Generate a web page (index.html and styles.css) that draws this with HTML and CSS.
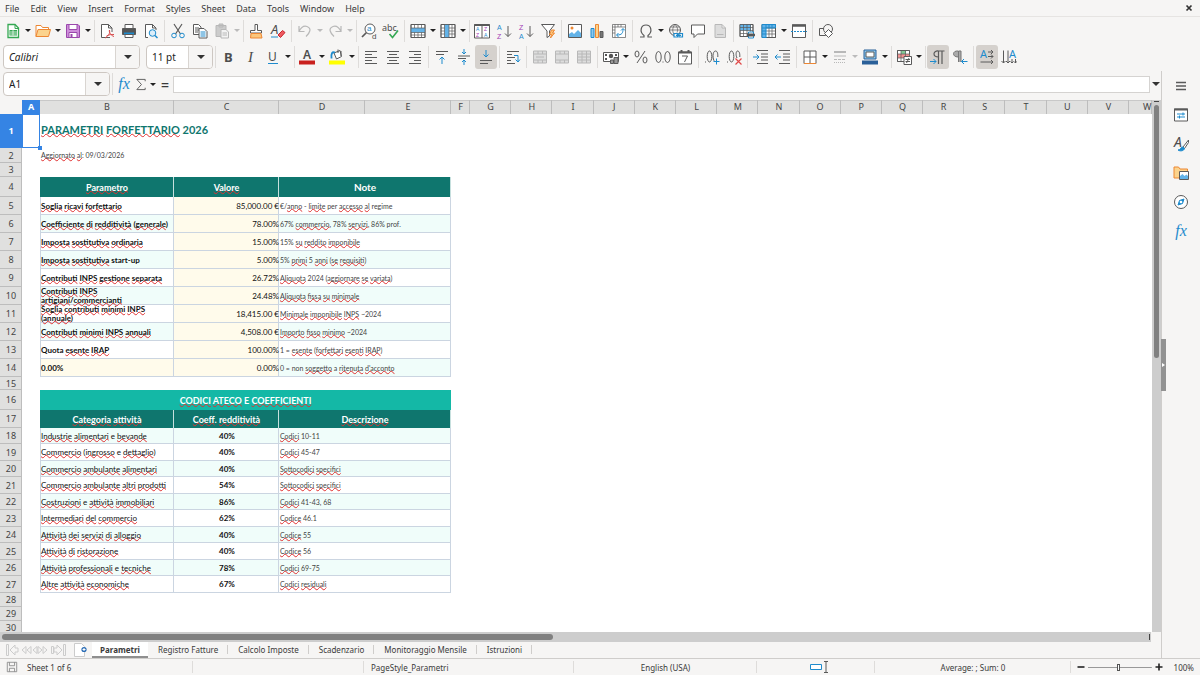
FILE: index.html
```html
<!DOCTYPE html>
<html lang="it">
<head>
<meta charset="utf-8">
<meta name="viewport" content="width=device-width, initial-scale=1">
<title>Parametri Forfettario 2026</title>
<link rel="stylesheet" href="styles.css">
</head>
<body>
<div class="app">
<nav class="menubar" aria-label="Menu">
<button>File</button><button>Edit</button><button>View</button><button>Insert</button><button>Format</button><button>Styles</button><button>Sheet</button><button>Data</button><button>Tools</button><button>Window</button><button>Help</button>
<button class="close" aria-label="Close"><svg viewBox="0 0 8 8"><path d="M1.5 1.5l5 5M6.500 1.500l-5 5" stroke-width="1.7"/></svg></button>
</nav>

<div class="toolbar" role="toolbar" aria-label="Standard">
<button class="tool" aria-label="New"><svg viewBox="0 0 16 16"><path class="gr" fill="#fff" d="M3 1.500h7l3.500 3.500v9.500h-10.500z" stroke-width="1.300"/><path class="gr" d="M10 1.500v4h3.500"/><path fill="#35a853" stroke="none" d="M4.500 7h7.500v5.500h-7.500z"/><path stroke="#fff" d="M5 9h7M8 7v5.500M5 11h7" stroke-width=".7"/></svg></button><button class="drop" aria-label="New options"></button>
<button class="tool" aria-label="Open"><svg viewBox="0 0 16 16"><path class="or" fill="#fff" d="M1 13.500v-11h5l1.500 2h6v3"/><path class="or" fill="#fbd38d" d="M1 13.500l2-7h12.500l-2 7z"/></svg></button><button class="drop" aria-label="Open options"></button>
<button class="tool" aria-label="Save"><svg viewBox="0 0 16 16"><path stroke="#9b48ac" fill="#cf8fdb" d="M1.500 1.500h11.500l1.500 1.500v11.500h-13z"/><path stroke="#9b48ac" fill="#fff" d="M4 1.500h8v5h-8zM4 9.500h8v5h-8z"/><path fill="#9b48ac" stroke="none" d="M5.500 11h2v3.500h-2z"/></svg></button><button class="drop" aria-label="Save options"></button>
<i class="sep"></i>
<button class="tool" aria-label="Export as PDF"><svg viewBox="0 0 16 16"><path fill="#fff" d="M11 14.500h-8.500v-13h7l3.500 3.500v4M9.500 1.500v3.500h3.500"/><path stroke="#d94a4a" d="M10.500 7c1 3-1.500 6.500-4.500 8M10.500 7c-1 2 2 6 4.500 6.500M7.500 13c2.500-1.500 5-1.500 7.500-1.500"/></svg></button>
<button class="tool" aria-label="Print"><svg viewBox="0 0 16 16"><path fill="#fff" d="M4 5v-3.500h8v3.500"/><path fill="#555" d="M1.500 5.500h13v6h-13z"/><path class="bl" stroke-width="2" d="M3 10.500h10"/><path fill="#fff" d="M4 11.500h8v3h-8z"/></svg></button>
<button class="tool" aria-label="Print preview"><svg viewBox="0 0 16 16"><path fill="#fff" d="M5 14.500h-2.500v-13h7l3.500 3.500v2M9.500 1.500v3.500h3.500"/><circle class="bl" fill="#dceefa" cx="9.500" cy="10" r="3.300"/><path class="bl" d="M12 12.500l2.500 2.500" stroke-width="1.500"/></svg></button>
<i class="sep"></i>
<button class="tool" aria-label="Cut"><svg viewBox="0 0 16 16"><path d="M4 1l6.500 10M12 1l-6.500 10" stroke-width="1.200"/><circle class="bl" cx="4" cy="12.500" r="2.300"/><circle class="bl" cx="12" cy="12.500" r="2.300"/></svg></button>
<button class="tool" aria-label="Copy"><svg viewBox="0 0 16 16"><path fill="#fff" d="M1.500 1.500h5l2.500 2.500v7.500h-7.500zM3 5h4M3 7h4M3 9h3"/><path fill="#fff" d="M7 5.500h5l3 3v6.500h-8z"/><path class="bl" d="M8.500 9h5M8.500 11h5M8.500 13h5"/></svg></button>
<button class="tool off" aria-label="Paste"><svg viewBox="0 0 16 16"><path fill="#ccc" d="M2 2.500h10v11h-10zM5 1h4v3h-4z"/><path fill="#f3f3f3" d="M7 6.500h5l2.500 2.500v6h-7.500zM8.500 10h4.500M8.500 12h4.500"/></svg></button><button class="drop off" aria-label="Paste options"></button>
<i class="sep"></i>
<button class="tool" aria-label="Clone formatting"><svg viewBox="0 0 16 16"><path fill="#fff" d="M7 1.500h2.500v6h4v2.500h-11v-2.500h4.500z"/><path class="or" fill="#fbc67c" d="M3 10.500h10l1 4.500h-11.500z"/></svg></button>
<button class="tool" aria-label="Clear formatting"><svg viewBox="0 0 16 16"><text x="1" y="11" font-size="13" font-style="italic">A</text><path class="bl" d="M1 14h7"/><path stroke="#c9252d" fill="#ee5a60" d="M8 12l4.500-4.500 2.500 2-4.500 5z"/></svg></button>
<i class="sep"></i>
<button class="tool off" aria-label="Undo"><svg viewBox="0 0 16 16"><path d="M2 3v5.500h5.500M2 8.500c2-4 5-6 8-5 5 2 3 6-1 10" stroke-width="1.200"/></svg></button><button class="drop off" aria-label="Undo list"></button>
<button class="tool off" aria-label="Redo"><svg viewBox="0 0 16 16"><path d="M14 3v5.500h-5.500M14 8.500c-2-4-5-6-8-5-5 2-3 6 1 10" stroke-width="1.200"/></svg></button><button class="drop off" aria-label="Redo list"></button>
<i class="sep"></i>
<button class="tool" aria-label="Find and replace"><svg viewBox="0 0 16 16"><circle fill="#fff" cx="9" cy="6" r="5"/><path d="M5.500 9.500l-4.500 4.500" stroke-width="1.700"/><text class="bt ls" x="6" y="8" font-size="8">a</text><text class="ls" x="11" y="16" font-size="8">d</text></svg></button>
<button class="tool" aria-label="Spelling"><svg viewBox="0 0 16 16"><text x="-1" y="8" font-size="9">abc</text><path stroke="#35a853" stroke-width="1.600" d="M6.500 11l3 3.500 5.500-7"/></svg></button>
<i class="sep"></i>
<button class="tool" aria-label="Row"><svg viewBox="0 0 16 16"><path fill="#fff" d="M1 1.500h14v13h-14z"/><path class="bf" d="M1 5h14v4.500h-14z"/><path class="thin" d="M1 1.500h14v13h-14zM1 5h14M1 9.500h14M1 12h14M4.500 1.500v3.500M8 1.500v3.500M11.500 1.500v3.500M4.500 9.500v5M8 9.500v5M11.500 9.500v5"/></svg></button><button class="drop" aria-label="Row options"></button>
<button class="tool" aria-label="Column"><svg viewBox="0 0 16 16"><path fill="#fff" d="M1 1.500h14v13h-14z"/><path class="bf" d="M4.500 1.500h4.500v13h-4.500z"/><path class="thin" d="M1 1.500h14v13h-14zM4.500 1.500v13M9 1.500v13M12 1.500v13M1 5h3.500M1 8h3.500M1 11h3.500M9 5h6M9 8h6M9 11h6"/></svg></button><button class="drop" aria-label="Column options"></button>
<i class="sep"></i>
<button class="tool" aria-label="Sort"><svg viewBox="0 0 16 16"><path fill="#fff" d="M.5 1.500h15v13.500h-15zM8 2v13"/><path stroke-width="2" d="M.5 2h15"/><text class="bt ls" x="2" y="8" font-size="5">A</text><text class="pt ls" x="2" y="14" font-size="5">Z</text><text class="pt ls" x="10" y="8" font-size="5">Z</text><text class="bt ls" x="10" y="14" font-size="5">A</text></svg></button>
<button class="tool" aria-label="Sort ascending"><svg viewBox="0 0 16 16"><text class="bt ls" x="1" y="6.500" font-size="7">A</text><text class="pt ls" x="1" y="15.500" font-size="7">Z</text><path d="M12 3v10.500M9 10.500l3 3 3-3"/></svg></button>
<button class="tool" aria-label="Sort descending"><svg viewBox="0 0 16 16"><text class="pt ls" x="1" y="6.500" font-size="7">Z</text><text class="bt ls" x="1" y="15.500" font-size="7">A</text><path d="M12 3v10.500M9 10.500l3 3 3-3"/></svg></button>
<button class="tool" aria-label="AutoFilter"><svg viewBox="0 0 16 16"><path fill="#fff" d="M1.500 1.500h13l-5 6.500v5l-2.500 1.500v-6.500z"/><path class="or" fill="#fbc67c" d="M11.500 7l-2 4.500h2l-1 3.500 4-5h-2l2-3z"/></svg></button>
<i class="sep"></i>
<button class="tool" aria-label="Image"><svg viewBox="0 0 16 16"><path fill="#fff" d="M1.500 1.500h13v13h-13z"/><circle class="of" cx="5" cy="5" r="1.500"/><path class="bf" d="M2 14v-3l3-2 2 2 4-4 3 3v4z"/></svg></button>
<button class="tool" aria-label="Chart"><svg viewBox="0 0 16 16"><path class="bl" fill="#8cc8ef" d="M2 5.500h3v9h-3z"/><path class="or" fill="#fbd38d" d="M6.500 1.500h3v13h-3z"/><path fill="#777" d="M11 8.500h3v6h-3z"/></svg></button>
<button class="tool" aria-label="Pivot table"><svg viewBox="0 0 16 16"><path fill="#fff" class="thin" d="M1.500 1.500h13v13h-13zM1.500 4h13M4 1.500v13M1.500 7h2.500M1.500 10h2.500M7 1.500v2.500M10 1.500v2.500"/><path class="bl" d="M6 12c5 0 6-2 6-6M10 7.500l2-2 2 2M7.500 10l-2 2 2 2"/></svg></button>
<i class="sep"></i>
<button class="tool" aria-label="Special character"><svg viewBox="0 0 16 16"><path stroke-width="1.200" d="M2 14h4v-1.500c-5-4-3-10.500 2-10.500s7 6.500 2 10.500v1.500h4"/></svg></button><button class="drop" aria-label="Special character list"></button>
<button class="tool" aria-label="Hyperlink"><svg viewBox="0 0 16 16"><circle cx="7" cy="7" r="5.500"/><path class="thin" d="M1.500 7h11M2.500 4h9M7 1.500c-3 3-3 8 0 11M7 1.500c3 3 3 6 2 8"/><path class="bl" fill="#f6f5f4" d="M6 10.500h3.500v3.500h-3.500zM11 10.500h3.500v3.500h-3.500zM8 12.300h5" stroke-width="1.200"/></svg></button>
<button class="tool" aria-label="Comment"><svg viewBox="0 0 16 16"><path fill="#fff" d="M1.500 2h13v9h-7l-3.500 3.500v-3.500h-2.500z"/></svg></button>
<button class="tool off" aria-label="Headers and footers"><svg viewBox="0 0 16 16"><path fill="#ddd" d="M3 1.500h7l3.500 3.500v9.500h-10.500zM10 1.500v3.500h3.500M5 11.500h6.500"/></svg></button>
<i class="sep"></i>
<button class="tool" aria-label="Print area"><svg viewBox="0 0 16 16"><path fill="#fff" d="M1 1.500h13v12h-13z"/><path class="bf" d="M1 1.500h11v6h-11z"/><path class="thin" d="M1 1.500h13v12h-13zM1 4.500h13M1 7.500h13M1 10.500h8M4.500 1.500v12M8 1.500v12M11.500 1.500v7"/><path class="bl" fill="#fff" d="M9.500 9h5v6h-5z"/><path fill="#555" d="M8.500 11h7v2h-7z"/></svg></button>
<button class="tool" aria-label="Freeze rows and columns"><svg viewBox="0 0 16 16"><path fill="#fff" d="M1 1.500h13.500v13h-13.500z"/><path class="bf" d="M1 1.500h13.500v3.500h-9.500v9.500h-4z"/><path class="thin" d="M5 5h9.500v9.500h-9.500M5 8h9.500M5 11h9.500M8 5v9.500M11 5v9.500"/><path class="bl" d="M1 1.500h13.500v3.500M1 1.500v13h4M5 1v14M1 5h13M1 8h4M1 11h4M8 1.500v3.500M11 1.500v3.500"/></svg></button><button class="drop" aria-label="Freeze options"></button>
<button class="tool" aria-label="Split window"><svg viewBox="0 0 16 16"><path fill="#fff" d="M1.500 2h13v12.500h-13z"/><path stroke-width="2.500" d="M1 2.500h14"/><path class="bl" stroke-dasharray="2 1" d="M0 8.500h16"/></svg></button>
<i class="sep"></i>
<button class="tool" aria-label="Draw functions"><svg viewBox="0 0 16 16"><path d="M1.500 5.500h6v7h-6z"/><circle fill="#f6f5f4" cx="10" cy="6" r="4.500"/><path fill="#fff" d="M10.500 6.500l4 4-4 4-4-4z"/></svg></button>
</div>

<div class="toolbar format" role="toolbar" aria-label="Formatting">
<div class="combo font"><input aria-label="Font name" value="Calibri"><button aria-label="Font list"></button></div>
<div class="combo size"><input aria-label="Font size" value="11 pt"><button aria-label="Size list"></button></div>
<i class="sep"></i>
<button class="tool" aria-label="Bold"><svg viewBox="0 0 16 16"><text x="3" y="13" font-size="13" font-weight="700">B</text></svg></button>
<button class="tool" aria-label="Italic"><svg viewBox="0 0 16 16"><text class="serif" x="5" y="13" font-size="15" font-style="italic">I</text></svg></button>
<button class="tool" aria-label="Underline"><svg viewBox="0 0 16 16"><text x="3" y="12" font-size="12">U</text><path class="bl" d="M3 14.500h10"/></svg></button><button class="drop" aria-label="Underline options"></button>
<i class="sep"></i>
<button class="tool" aria-label="Font color"><svg viewBox="0 0 16 16"><text x="4" y="10" font-size="12" font-weight="600">A</text><path fill="#c9211e" stroke="none" d="M0 11.500h16v4h-16z"/></svg></button><button class="drop" aria-label="Font color options"></button>
<button class="tool" aria-label="Background color"><svg viewBox="0 0 16 16"><path fill="#fff" d="M5 4l6-2.500 1.500 6-5 2.500z"/><path d="M9 4v-3.500M12 2v5"/><path class="bl" d="M6 3.500c-3-1-4 1-3.500 6" stroke-width="1.800"/><path fill="#ff0" stroke="none" d="M0 11.500h16v4h-16z"/></svg></button><button class="drop" aria-label="Background color options"></button>
<i class="sep"></i>
<button class="tool" aria-label="Align left"><svg viewBox="0 0 16 16"><path d="M2 2.500h12M2 5.500h7M2 8.500h12M2 11.500h7M2 14.500h12"/></svg></button>
<button class="tool" aria-label="Center"><svg viewBox="0 0 16 16"><path d="M2 2.500h12M4 5.500h8M2 8.500h12M4 11.500h8M2 14.500h12"/></svg></button>
<button class="tool" aria-label="Align right"><svg viewBox="0 0 16 16"><path d="M2 2.500h12M7 5.500h7M2 8.500h12M7 11.500h7M2 14.500h12"/></svg></button>
<i class="sep"></i>
<button class="tool" aria-label="Align top"><svg viewBox="0 0 16 16"><path d="M2 2.500h12M2 5.500h8"/><path class="bl" d="M8 15v-7M5.500 10.500l2.500-2.500 2.500 2.500"/></svg></button>
<button class="tool" aria-label="Center vertically"><svg viewBox="0 0 16 16"><path d="M2 7h12M2 9.500h8"/><path class="bl" d="M8 0v5M6 3l2 2 2-2M8 16v-5M6 13l2-2 2 2"/></svg></button>
<button class="tool on" aria-label="Align bottom"><svg viewBox="0 0 16 16"><path d="M2 11.500h12M2 14.500h8"/><path class="bl" d="M8 1v7M5.500 5.500l2.500 2.500 2.500-2.500"/></svg></button>
<i class="sep"></i>
<button class="tool" aria-label="Wrap text"><svg viewBox="0 0 16 16"><path d="M2 2.500h12M2 5.500h5M2 8.500h8M2 11.500h4M2 14.500h8"/><path class="bl" d="M9 6.500h4v6.500M10.500 10.500l2.500 2.500 2-2.500"/></svg></button>
<i class="sep"></i>
<button class="tool off" aria-label="Merge and center"><svg viewBox="0 0 16 16"><path fill="#ddd" d="M1.500 2h13v12h-13zM1.500 5h13M1.500 11h13M6 2v3M10.500 2v3M6 11v3M10.500 11v3M4 8h8"/></svg></button>
<button class="tool off" aria-label="Merge cells"><svg viewBox="0 0 16 16"><path fill="#ddd" d="M1.500 2h13v12h-13zM1.500 5h13M1.500 11h13M6 2v3M10.500 2v3M6 11v3M10.500 11v3"/></svg></button>
<button class="tool off" aria-label="Split cells"><svg viewBox="0 0 16 16"><path fill="#ddd" d="M1.500 2h13v12h-13zM1.500 5h13M1.500 8h13M1.500 11h13M6 2v12M10.500 2v12"/></svg></button>
<i class="sep"></i>
<button class="tool" aria-label="Currency"><svg viewBox="0 0 16 16"><path fill="#fff" d="M.5 3.500h15v9h-15z"/><path fill="#555" stroke="none" d="M2 5h2v2h-2zM12 5h2v2h-2zM2 9h2v2h-2z"/><circle fill="#555" stroke="none" cx="8" cy="7" r="2.200"/><path fill="#999" d="M7.500 11h3v3.500h-3zM11 8.500h4v6h-4z"/></svg></button><button class="drop" aria-label="Currency options"></button>
<button class="tool" aria-label="Percent"><svg viewBox="0 0 16 16"><ellipse cx="4" cy="5" rx="2" ry="3"/><ellipse cx="12" cy="11" rx="2" ry="3"/><path d="M12 2l-8 12"/></svg></button>
<button class="tool" aria-label="Number"><svg viewBox="0 0 16 16"><ellipse cx="3.500" cy="8" rx="2.700" ry="5.500"/><ellipse cx="12.500" cy="8" rx="2.700" ry="5.500"/><path d="M7.500 13h1"/></svg></button>
<button class="tool" aria-label="Date"><svg viewBox="0 0 16 16"><path fill="#fff" d="M1.500 3h13v12h-13z"/><path stroke-width="2" d="M1.500 3.500h13M4.500 1v2M11.500 1v2"/><path d="M5 7h5.500l-3 6"/></svg></button>
<i class="sep"></i>
<button class="tool" aria-label="Add decimal place"><svg viewBox="0 0 16 16"><ellipse cx="5.500" cy="7.500" rx="2.300" ry="5.500"/><path d="M1 13h1M11 13c-3-3-2.500-11 .5-11 2 0 2.500 3 2.300 6"/><path class="bl" d="M9.500 12.500h6M12.500 9.500v6"/></svg></button>
<button class="tool" aria-label="Delete decimal place"><svg viewBox="0 0 16 16"><ellipse cx="5.500" cy="7.500" rx="2.300" ry="5.500"/><path d="M1 13h1M11 9c-1.500-3-1-7 .5-7 2 0 2.500 3 2.300 6"/><path stroke="#e04848" d="M9.500 9.500l6 6M15.500 9.500l-6 6" stroke-width="1.200"/></svg></button>
<i class="sep"></i>
<button class="tool" aria-label="Increase indent"><svg viewBox="0 0 16 16"><path d="M4 1.500h11M8 5h7M8 8h7M8 11h7M4 14.500h11"/><path class="bl" d="M0 8h6M3.500 5.500l2.500 2.500-2.500 2.500"/></svg></button>
<button class="tool" aria-label="Decrease indent"><svg viewBox="0 0 16 16"><path d="M4 1.500h11M8 5h7M8 8h7M8 11h7M4 14.500h11"/><path class="bl" d="M0 8h6M2.500 5.500l-2.500 2.500 2.500 2.500"/></svg></button>
<i class="sep"></i>
<button class="tool" aria-label="Borders"><svg viewBox="0 0 16 16"><path fill="#fff" d="M2 2h12v12.500h-12zM8 2v12.500M2 8h12"/><path class="or" d="M2 14.500h12"/></svg></button><button class="drop" aria-label="Borders options"></button>
<button class="tool off" aria-label="Border style"><svg viewBox="0 0 16 16"><path stroke-width="2" d="M2 3h12"/><path d="M2 7h12"/><path stroke-dasharray="3 1" d="M2 10.500h12"/><path stroke-dasharray="1 1" d="M2 13.500h12"/></svg></button><button class="drop off" aria-label="Border style options"></button>
<button class="tool" aria-label="Border color"><svg viewBox="0 0 16 16"><path fill="#8cc8ef" stroke="#2a6099" d="M2 1h12v9h-12z"/><path fill="#fff" d="M4 3h8v5h-8z"/><path fill="#2a6099" stroke="none" d="M0 11.500h16v4h-16z"/></svg></button><button class="drop" aria-label="Border color options"></button>
<i class="sep"></i>
<button class="tool" aria-label="Conditional formatting"><svg viewBox="0 0 16 16"><path fill="#fff" d="M1.500 1.500h12v11h-12z"/><path fill="#83c995" stroke="none" d="M5 2h5v3h-5z"/><path fill="#f29393" stroke="none" d="M2 5h12v4h-12z"/><path class="thin" d="M1.500 1.500h12v11h-12zM1.500 5h12M1.500 9h12M5 1.500v11M9.500 1.500v11"/><path fill="#fff" d="M8 7.500h7.500v8h-7.500zM9.500 10.500h4.500M9.500 12.500h4.500M13 9l-2.500 5"/></svg></button><button class="drop" aria-label="Conditional formatting options"></button>
<i class="sep"></i>
<button class="tool on" aria-label="Left to right"><svg viewBox="0 0 16 16"><path d="M8.500 15v-13h6M12 2v13M8.500 2c-6-.5-6 6 0 6" stroke-width="1.200"/><path class="bl" d="M0 12.500h6M3.500 10l2.500 2.500-2.500 2.500"/></svg></button>
<button class="tool" aria-label="Right to left"><svg viewBox="0 0 16 16"><path fill="#aaa" stroke="#777" d="M6.500 13v-11h2.500v11M6 2c-6-.5-6 6 0 6"/><path class="bl" d="M15.500 12.500h-6M12 10l-2.500 2.500 2.500 2.500"/></svg></button>
<i class="sep"></i>
<button class="tool on" aria-label="Text direction horizontal"><svg viewBox="0 0 16 16"><text class="bt" x="1" y="9" font-size="11">A</text><path d="M9 3h5M9 7.500h5M1.500 13h12.500M12 1l2 2-2 2M12 5.500l2 2-2 2M12 11l2 2-2 2"/></svg></button>
<button class="tool" aria-label="Text direction vertical"><svg viewBox="0 0 16 16"><text class="bt" x="8" y="9" font-size="11">A</text><path d="M2.500 1.500v12.500M7 1.500v12.500M11 10v4M14.500 10v4M.5 12l2 2 2-2M5 12l2 2 2-2M9.500 12.500l1.500 1.500 1.500-1.500M13 12.500l1.500 1.500 1-1.500"/></svg></button>
</div>

<main class="work">
<section class="sheet-area">
<div class="formula-bar">
<div class="combo name"><input aria-label="Name box" value="A1"><button aria-label="Name list"></button></div>
<i class="sep"></i>
<button class="fx" aria-label="Function wizard">fx</button>
<button class="sum" aria-label="Select function"><svg viewBox="0 0 12 14"><path d="M10.500 3.500v-2h-9l5 5.500-5 5.500h9v-2"/></svg></button><button class="drop" aria-label="Function list"></button>
<button class="eq" aria-label="Formula">=</button>
<input class="formula" aria-label="Formula input">
<button class="expand" aria-label="Expand formula bar"></button>
</div>
<div class="view">
<div class="grid-wrap">
<table class="grid">
<colgroup><col class="ch"><col class="ca"><col class="cb"><col class="cc"><col class="cd"><col class="ce"><col class="cf"><col span="16"><col class="cw"></colgroup>
<thead><tr><th></th><th class="sel">A</th><th>B</th><th>C</th><th>D</th><th>E</th><th>F</th><th>G</th><th>H</th><th>I</th><th>J</th><th>K</th><th>L</th><th>M</th><th>N</th><th>O</th><th>P</th><th>Q</th><th>R</th><th>S</th><th>T</th><th>U</th><th>V</th><th class="last">W</th></tr></thead>
<tbody>
<tr class="h34"><th class="sel">1</th><td class="cursor"></td><td class="title" colspan="4"><u>PARAMETRI</u> <u>FORFETTARIO</u> 2026</td></tr>
<tr class="h15"><th>2</th><td></td><td class="note" colspan="4"><u>Aggiornato</u> <u>al</u>: 09/03/2026</td></tr>
<tr class="h14"><th>3</th></tr>
<tr class="head h20"><th>4</th><td></td><td><u>Parametro</u></td><td><u>Valore</u></td><td class="large" colspan="2">Note</td></tr>
</tbody>
<tbody class="params">
<tr><th>5</th><td></td><td><u>Soglia</u> <u>ricavi</u> <u>forfettario</u></td><td>85,000.00 €</td><td colspan="2">€/<u>anno</u> - <u>limite</u> per <u>accesso</u> <u>al</u> regime</td></tr>
<tr><th>6</th><td></td><td><u>Coefficiente</u> <u>di</u> <u>redditività</u> (<u>generale</u>)</td><td>78.00%</td><td colspan="2">67% <u>commercio</u>, 78% <u>servizi</u>, 86% prof.</td></tr>
<tr><th>7</th><td></td><td><u>Imposta</u> <u>sostitutiva</u> <u>ordinaria</u></td><td>15.00%</td><td colspan="2">15% <u>su</u> <u>reddito</u> <u>imponibile</u></td></tr>
<tr><th>8</th><td></td><td><u>Imposta</u> <u>sostitutiva</u> start-up</td><td>5.00%</td><td colspan="2">5% <u>primi</u> 5 <u>anni</u> (<u>se</u> <u>requisiti</u>)</td></tr>
<tr><th>9</th><td></td><td><u>Contributi</u> <u>INPS</u> <u>gestione</u> <u>separata</u></td><td>26.72%</td><td colspan="2"><u>Aliquota</u> 2024 (<u>aggiornare</u> <u>se</u> <u>variata</u>)</td></tr>
<tr><th>10</th><td></td><td><u>Contributi</u> <u>INPS</u><br><u>artigiani</u>/<u>commercianti</u></td><td>24.48%</td><td colspan="2"><u>Aliquota</u> <u>fissa</u> <u>su</u> <u>minimale</u></td></tr>
<tr><th>11</th><td></td><td><u>Soglia</u> <u>contributi</u> <u>minimi</u> <u>INPS</u><br>(<u>annuale</u>)</td><td>18,415.00 €</td><td colspan="2"><u>Minimale</u> <u>imponibile</u> <u>INPS</u> ~2024</td></tr>
<tr><th>12</th><td></td><td><u>Contributi</u> <u>minimi</u> <u>INPS</u> <u>annuali</u></td><td>4,508.00 €</td><td colspan="2"><u>Importo</u> <u>fisso</u> <u>minimo</u> ~2024</td></tr>
<tr><th>13</th><td></td><td>Quota <u>esente</u> <u>IRAP</u></td><td>100.00%</td><td colspan="2">1 = <u>esente</u> (<u>forfettari</u> <u>esenti</u> <u>IRAP</u>)</td></tr>
<tr><th>14</th><td></td><td class="cream">0.00%</td><td>0.00%</td><td colspan="2">0 = non <u>soggetto</u> a <u>ritenuta</u> <u>d'acconto</u></td></tr>
</tbody>
<tbody>
<tr class="h13"><th>15</th></tr>
<tr class="band h20"><th>16</th><td></td><td colspan="4"><u>CODICI</u> <u>ATECO</u> E <u>COEFFICIENTI</u></td></tr>
<tr class="head"><th>17</th><td></td><td><u>Categoria</u> <u>attività</u></td><td><u>Coeff</u>. <u>redditività</u></td><td colspan="2"><u>Descrizione</u></td></tr>
</tbody>
<tbody class="codes">
<tr><th>18</th><td></td><td><u>Industrie</u> <u>alimentari</u> e <u>bevande</u></td><td>40%</td><td colspan="2"><u>Codici</u> 10-11</td></tr>
<tr><th>19</th><td></td><td><u>Commercio</u> (<u>ingrosso</u> e <u>dettaglio</u>)</td><td>40%</td><td colspan="2"><u>Codici</u> 45-47</td></tr>
<tr><th>20</th><td></td><td><u>Commercio</u> <u>ambulante</u> <u>alimentari</u></td><td>40%</td><td colspan="2"><u>Sottocodici</u> <u>specifici</u></td></tr>
<tr><th>21</th><td></td><td><u>Commercio</u> <u>ambulante</u> <u>altri</u> <u>prodotti</u></td><td>54%</td><td colspan="2"><u>Sottocodici</u> <u>specifici</u></td></tr>
<tr><th>22</th><td></td><td><u>Costruzioni</u> e <u>attività</u> <u>immobiliari</u></td><td>86%</td><td colspan="2"><u>Codici</u> 41-43, 68</td></tr>
<tr><th>23</th><td></td><td><u>Intermediari</u> <u>del</u> <u>commercio</u></td><td>62%</td><td colspan="2"><u>Codice</u> 46.1</td></tr>
<tr><th>24</th><td></td><td><u>Attività</u> <u>dei</u> <u>servizi</u> <u>di</u> <u>alloggio</u></td><td>40%</td><td colspan="2"><u>Codice</u> 55</td></tr>
<tr><th>25</th><td></td><td><u>Attività</u> <u>di</u> <u>ristorazione</u></td><td>40%</td><td colspan="2"><u>Codice</u> 56</td></tr>
<tr><th>26</th><td></td><td><u>Attività</u> <u>professionali</u> e <u>tecniche</u></td><td>78%</td><td colspan="2"><u>Codici</u> 69-75</td></tr>
<tr><th>27</th><td></td><td><u>Altre</u> <u>attività</u> <u>economiche</u></td><td>67%</td><td colspan="2"><u>Codici</u> <u>residuali</u></td></tr>
</tbody>
<tbody><tr class="h14"><th>28</th></tr><tr class="h14"><th>29</th></tr><tr class="h14"><th>30</th></tr></tbody>
</table>
</div>
<div class="vscroll"><i></i></div>
</div>
<div class="hscroll"><i></i></div>
<div class="tabs">
<button class="navs" aria-label="Scroll sheets"><svg class="wide" viewBox="0 0 62 14"><path d="M1.500 1.500h2v11h-2zM5 7l5-5v3h3v4h-3v3zM17 7l4-3.500v7zM22 7l4-3.500v7zM28 7l4-3.500v7zM42 7l-4-3.500v7zM37 7l-4-3.500v7zM46.500 3.500h2v7h-2zM57 7l-5-5v3h-3v4h3v3zM58.500 1.500h2v11h-2z"/></svg></button>
<button class="add" aria-label="Add sheet"><svg viewBox="0 0 14 14"><path stroke="#ccc" fill="#fff" d="M1.500.5h7l3 3v10h-10z"/><circle fill="#2a6cb5" stroke="none" cx="11" cy="6.500" r="2.600"/><path stroke="#fff" d="M9.500 6.500h3M11 5v3"/></svg></button>
<button class="tab current">Parametri</button><button class="tab">Registro Fatture</button><button class="tab">Calcolo Imposte</button><button class="tab">Scadenzario</button><button class="tab">Monitoraggio Mensile</button><button class="tab">Istruzioni</button>
</div>
</section>
<aside class="sidebar" aria-label="Sidebar">
<button class="handle" aria-label="Hide sidebar"></button>
<button aria-label="Settings"><svg viewBox="0 0 16 16"><path stroke-width="1.500" d="M3 4.500h10M3 8h10M3 11.500h10"/></svg></button>
<button aria-label="Properties"><svg viewBox="0 0 16 16"><path fill="#fff" d="M1.500 2h13v12h-13z"/><path stroke-width="2" d="M1 2.500h14"/><path class="bl" d="M4 7h8M4 10h8M10 5.500v3M6.500 8.500v3"/></svg></button>
<button aria-label="Styles"><svg viewBox="0 0 16 16"><text x="1" y="11" font-size="14" font-style="italic">A</text><path fill="#fff" d="M15.500 4l-5.500 7 1.500 1.500 4-6z"/><path class="bl" fill="#1e8bcd" d="M10 11c-3 0-2 3-5 3 2 1.500 6 1 6.500-1.500z"/></svg></button>
<button aria-label="Gallery"><svg viewBox="0 0 16 16"><path class="or" fill="#fbd38d" d="M1 13v-11h4.500l1.500 2h7.500v9z"/><path fill="#fff" d="M6.500 6.500h9v8h-9z"/><path class="bf" d="M7 14v-3l2.500-2 2 2 2-1.500 1.500 1.500v3z"/></svg></button>
<button aria-label="Navigator"><svg viewBox="0 0 16 16"><circle fill="#fff" cx="8" cy="8" r="6.500"/><path class="bl" fill="#1e8bcd" d="M11 5l-1.500 4.500-4.500 1.500 1.500-4.500z"/><circle fill="#fff" stroke="none" cx="8" cy="8" r="1.300"/></svg></button>
<button class="fx" aria-label="Functions">fx</button>
</aside>
</main>

<footer class="status">
<span class="doc"><svg viewBox="0 0 14 14"><path stroke="#888" d="M1.500 1.500h11v11h-11zM4 1.500v4h6v-4M4 12.500v-4h6v4"/></svg>Sheet 1 of 6</span>
<span></span>
<span class="style">PageStyle_Parametri</span>
<span class="mid">English (USA)</span>
<span class="mid ins-cell"><svg class="ins" viewBox="0 0 20 12"><path class="bl" fill="#fff" d="M1.500 3.500h11v5h-11z"/><path d="M15 .5h4M17 .5v11M15 11.500h4"/></svg></span>
<span class="mid">Average: ; Sum: 0</span>
<span class="zoom"><button aria-label="Zoom out"><svg viewBox="0 0 8 8"><path stroke-width="1.600" d="M.5 4h7"/></svg></button><input type="range" aria-label="Zoom" min="0" max="100" value="48"><button aria-label="Zoom in"><svg viewBox="0 0 8 8"><path stroke-width="1.600" d="M.5 4h7M4 .5v7"/></svg></button><b>100%</b></span>
</footer>
</div>
</body>
</html>
```
FILE: styles.css
```css
* { box-sizing: border-box; }
body { margin: 0; background: #f6f5f4; color: #3a3a3a; font: 9px "Noto Sans", sans-serif; }
button, input { font: inherit; color: inherit; margin: 0; padding: 0; border: 0; background: none; border-radius: 0; }
button { display: flex; align-items: center; justify-content: center; }
svg { display: block; width: 16px; height: 16px; fill: none; stroke: #5a5a5a; stroke-width: 1; overflow: visible; }
svg text { fill: #4d4d4d; stroke: none; }
svg .bt { fill: #1e8bcd; }
svg .pt { fill: #a23cb5; }
svg .ls { font-family: "Liberation Sans", sans-serif; }
svg .serif { font-family: "Liberation Serif", serif; }
.thin { stroke-width: .7; }
.bl { stroke: #1e8bcd; }
.gr { stroke: #35a853; }
.or { stroke: #ed8733; }
.bf { fill: #63b3e8; stroke: none; }
.of { fill: #ed8733; stroke: none; }
.off svg { stroke: #b8b8b8; }

.app { display: flex; flex-direction: column; height: 100vh; overflow: hidden; }

.menubar { display: flex; height: 17px; padding-left: 5px; gap: 11px; border-bottom: 1px solid #e6e4e2; }
.menubar .close { margin: 0 7px 0 auto; }
.close svg { width: 8px; height: 8px; stroke: #333; }

.toolbar { display: flex; align-items: center; height: 27px; padding-left: 2px; }
.format { padding: 0 0 2px 3px; }
.tool { width: 22px; height: 24px; border-radius: 3px; flex: none; }
.tool.on { background: #d5d1cd; }
.drop { width: 8px; height: 24px; flex: none; }
.drop::before, .combo button::before, .expand::before { content: ""; border: solid transparent; border-width: 3px 3px 0; border-top-color: #222; }
.combo button::before, .expand::before { border-width: 4px 4px 0; border-top-color: #333; }
.drop.off::before { border-top-color: #bbb; }
.sep { width: 5px; height: 22px; flex: none; background: linear-gradient(#dedcda, #dedcda) center / 1px 100% no-repeat; }
.drop + .sep { width: 4px; }

.combo { display: flex; height: 24px; border: 1px solid #cdc7c2; border-radius: 4px; background: #fff; overflow: hidden; }
.combo input { flex: 1; min-width: 0; padding-left: 5px; font-size: 10px; color: #222; }
.combo button { width: 24px; border-left: 1px solid #d9d5d1; background: #f6f5f4; }
.font { width: 137px; margin-right: 6px; }
.font input { font-style: italic; }
.size { width: 67px; }
.name { width: 107px; }

.work { display: flex; flex: 1; min-height: 0; }
.sheet-area { display: flex; flex-direction: column; flex: 1; min-width: 0; border-right: 1px solid #cfcdcb; }
.formula-bar { display: flex; align-items: center; flex: none; height: 29px; padding: 0 0 3px 3px; }
.fx { width: 22px; color: #1e8bcd; font: italic 16px "Liberation Serif", serif; }
.formula-bar .fx { width: 18px; }
.sum { width: 16px; }
.sum svg { width: 12px; height: 13px; }
.eq { width: 16px; font-size: 14px; font-weight: 600; }
.formula { flex: 1; min-width: 0; height: 17px; background: #fff; border: 1px solid #d5d3d1; }
.expand { width: 10px; height: 20px; margin-left: 1px; }

.view { display: flex; flex: 1; min-height: 0; background: #fff; }
.grid-wrap { flex: 1; min-width: 0; overflow: hidden; }
.grid { width: 100%; table-layout: fixed; border-collapse: separate; border-spacing: 0; font: 8px "Lato", sans-serif; color: #111; }
.ch { width: 22px; } .ca { width: 18px; } .cb { width: 134px; } .cc { width: 105px; }
.cd { width: 86px; } .ce { width: 86px; } .cf { width: 19px; } .cw { width: 23px; }
.grid th, .grid td { padding: 0; white-space: nowrap; line-height: 9px; }
.grid th { background: #e0e0df; box-shadow: inset -1px -1px #bdbdbd; color: #444; font: 9px/10px "Noto Sans", sans-serif; vertical-align: middle; }
.grid thead th { height: 14px; box-shadow: inset -1px 0 #bdbdbd, inset 0 1px #c8c8c8; }
.grid thead th:first-child { background: #f6f5f4; box-shadow: none; }
.grid th.sel, .grid thead th.sel { background: #3584e4; color: #fff; font-weight: 700; box-shadow: none; }
.grid th.last { overflow: hidden; padding-left: 14px; text-align: left; }
.grid tbody tr { height: 18px; }
.grid .h34 { height: 34px; } .grid .h20 { height: 20px; } .grid .h15 { height: 15px; }
.grid .h14 { height: 14px; } .grid .h13 { height: 13px; }
.grid .codes tr { height: 16px; }
.grid .codes tr:nth-child(even) { height: 17px; }
.grid u { text-decoration: underline wavy #e03030 1px; text-underline-offset: -1px; text-decoration-skip-ink: none; }
.cursor { position: relative; box-shadow: inset -1px -1px #3584e4, inset 1px 1px #3584e4; }
.cursor::after { content: ""; position: absolute; right: -2px; bottom: -2px; width: 4px; height: 4px; background: #3584e4; }
.grid .title { padding: 0 0 3px 1px; color: #0f766e; font-size: 11px; line-height: 14px; font-weight: 700; }
.grid .note { padding-left: 1px; color: #444; font-size: 7px; }
.head td:nth-child(n+3), .band td:nth-child(n+3) { background: #0f766e; box-shadow: inset -1px 0 #c6e0de; color: #fff; text-align: center; font-size: 9px; font-weight: 700; }
.head td.large:nth-child(n+3) { font-size: 10px; }
.band td:nth-child(n+3) { background: #14b8a6; box-shadow: none; }
.params td:nth-child(n+3), .codes td:nth-child(n+3) { padding: 0 0 0 1px; box-shadow: inset -1px -1px #cbd5e1; }
.params td:nth-child(3), .codes td:nth-child(3) { box-shadow: inset 1px 0 #cbd5e1, inset -1px -1px #cbd5e1; }
.params tr:nth-child(even) td:nth-child(n+3), .codes tr:nth-child(odd) td:nth-child(n+3) { background: #f0fdfa; }
.params tr td:nth-child(3) { font-weight: 700; }
.params tr:nth-child(n) td:nth-child(4), .params tr:nth-child(n) td.cream { background: #fffbeb; }
.params td:nth-child(4) { text-align: right; }
.params td:nth-child(5), .codes td:nth-child(5) { color: #444; font-size: 7px; }
.codes td:nth-child(4) { text-align: center; font-weight: 700; }

.vscroll { width: 9px; padding: 5px 2px 0; background: linear-gradient(#444, #444) center 1px / 5px 1px no-repeat #cdcdcd; }
.vscroll i { display: block; height: 48%; border-radius: 3px; background: #808080; }
.hscroll { flex: none; height: 10px; padding: 2px; background: linear-gradient(#444, #444) right 1px center / 1px 6px no-repeat #cdcdcd; margin-right: 10px; }
.hscroll i { display: block; width: 48%; height: 6px; border-radius: 3px; background: #808080; }

.tabs { display: flex; flex: none; height: 16px; padding-left: 5px; font-size: 8px; }
.navs svg { width: 62px; height: 14px; stroke: #ccc; }
.add { width: 25px; }
.add svg { width: 14px; height: 14px; }
.tab { height: 15px; padding: 0 10px; background: linear-gradient(#cfcdcb, #cfcdcb) right / 1px 9px no-repeat; }
.tab.current { height: 16px; padding: 0 8px; background: #fff; border-bottom: 2px solid #8f8f8f; font-weight: 700; }

.sidebar { position: relative; display: flex; flex-direction: column; align-items: center; gap: 5px; width: 38px; padding-top: 3px; }
.sidebar button { width: 24px; height: 24px; }
.sidebar .handle { position: absolute; left: -1px; top: 50%; width: 5px; height: 52px; margin-top: -26px; background: #929292; }
.handle::before { content: ""; border: solid transparent; border-width: 2px 0 2px 3px; border-left-color: #fff; }

.status { display: grid; grid-template-columns: 193fr 171fr 210fr 183fr 118fr 196fr 129px; flex: none; height: 17px; border-top: 1px solid #cfcdcb; font-size: 8px; }
.status > span { display: flex; align-items: center; background: linear-gradient(#dedcda, #dedcda) right / 1px 12px no-repeat; }
.status .doc { gap: 9px; padding-left: 6px; }
.doc svg { width: 12px; height: 12px; }
.status .style { padding-left: 7px; }
.status .mid { justify-content: center; }
.status .ins-cell { padding-left: 6px; }
.ins { width: 20px; height: 12px; }
.status .zoom { gap: 3px; padding: 0 6px; background: none; }
.zoom svg { width: 8px; height: 8px; stroke: #222; }
.zoom input { flex: 1; min-width: 0; height: 10px; appearance: none; background: linear-gradient(#999, #999) center / 100% 1px no-repeat; }
.zoom input::-webkit-slider-thumb { appearance: none; width: 3px; height: 7px; border: 1px solid #555; background: #fff; }
.zoom b { margin-left: 8px; font-weight: 400; }
```
